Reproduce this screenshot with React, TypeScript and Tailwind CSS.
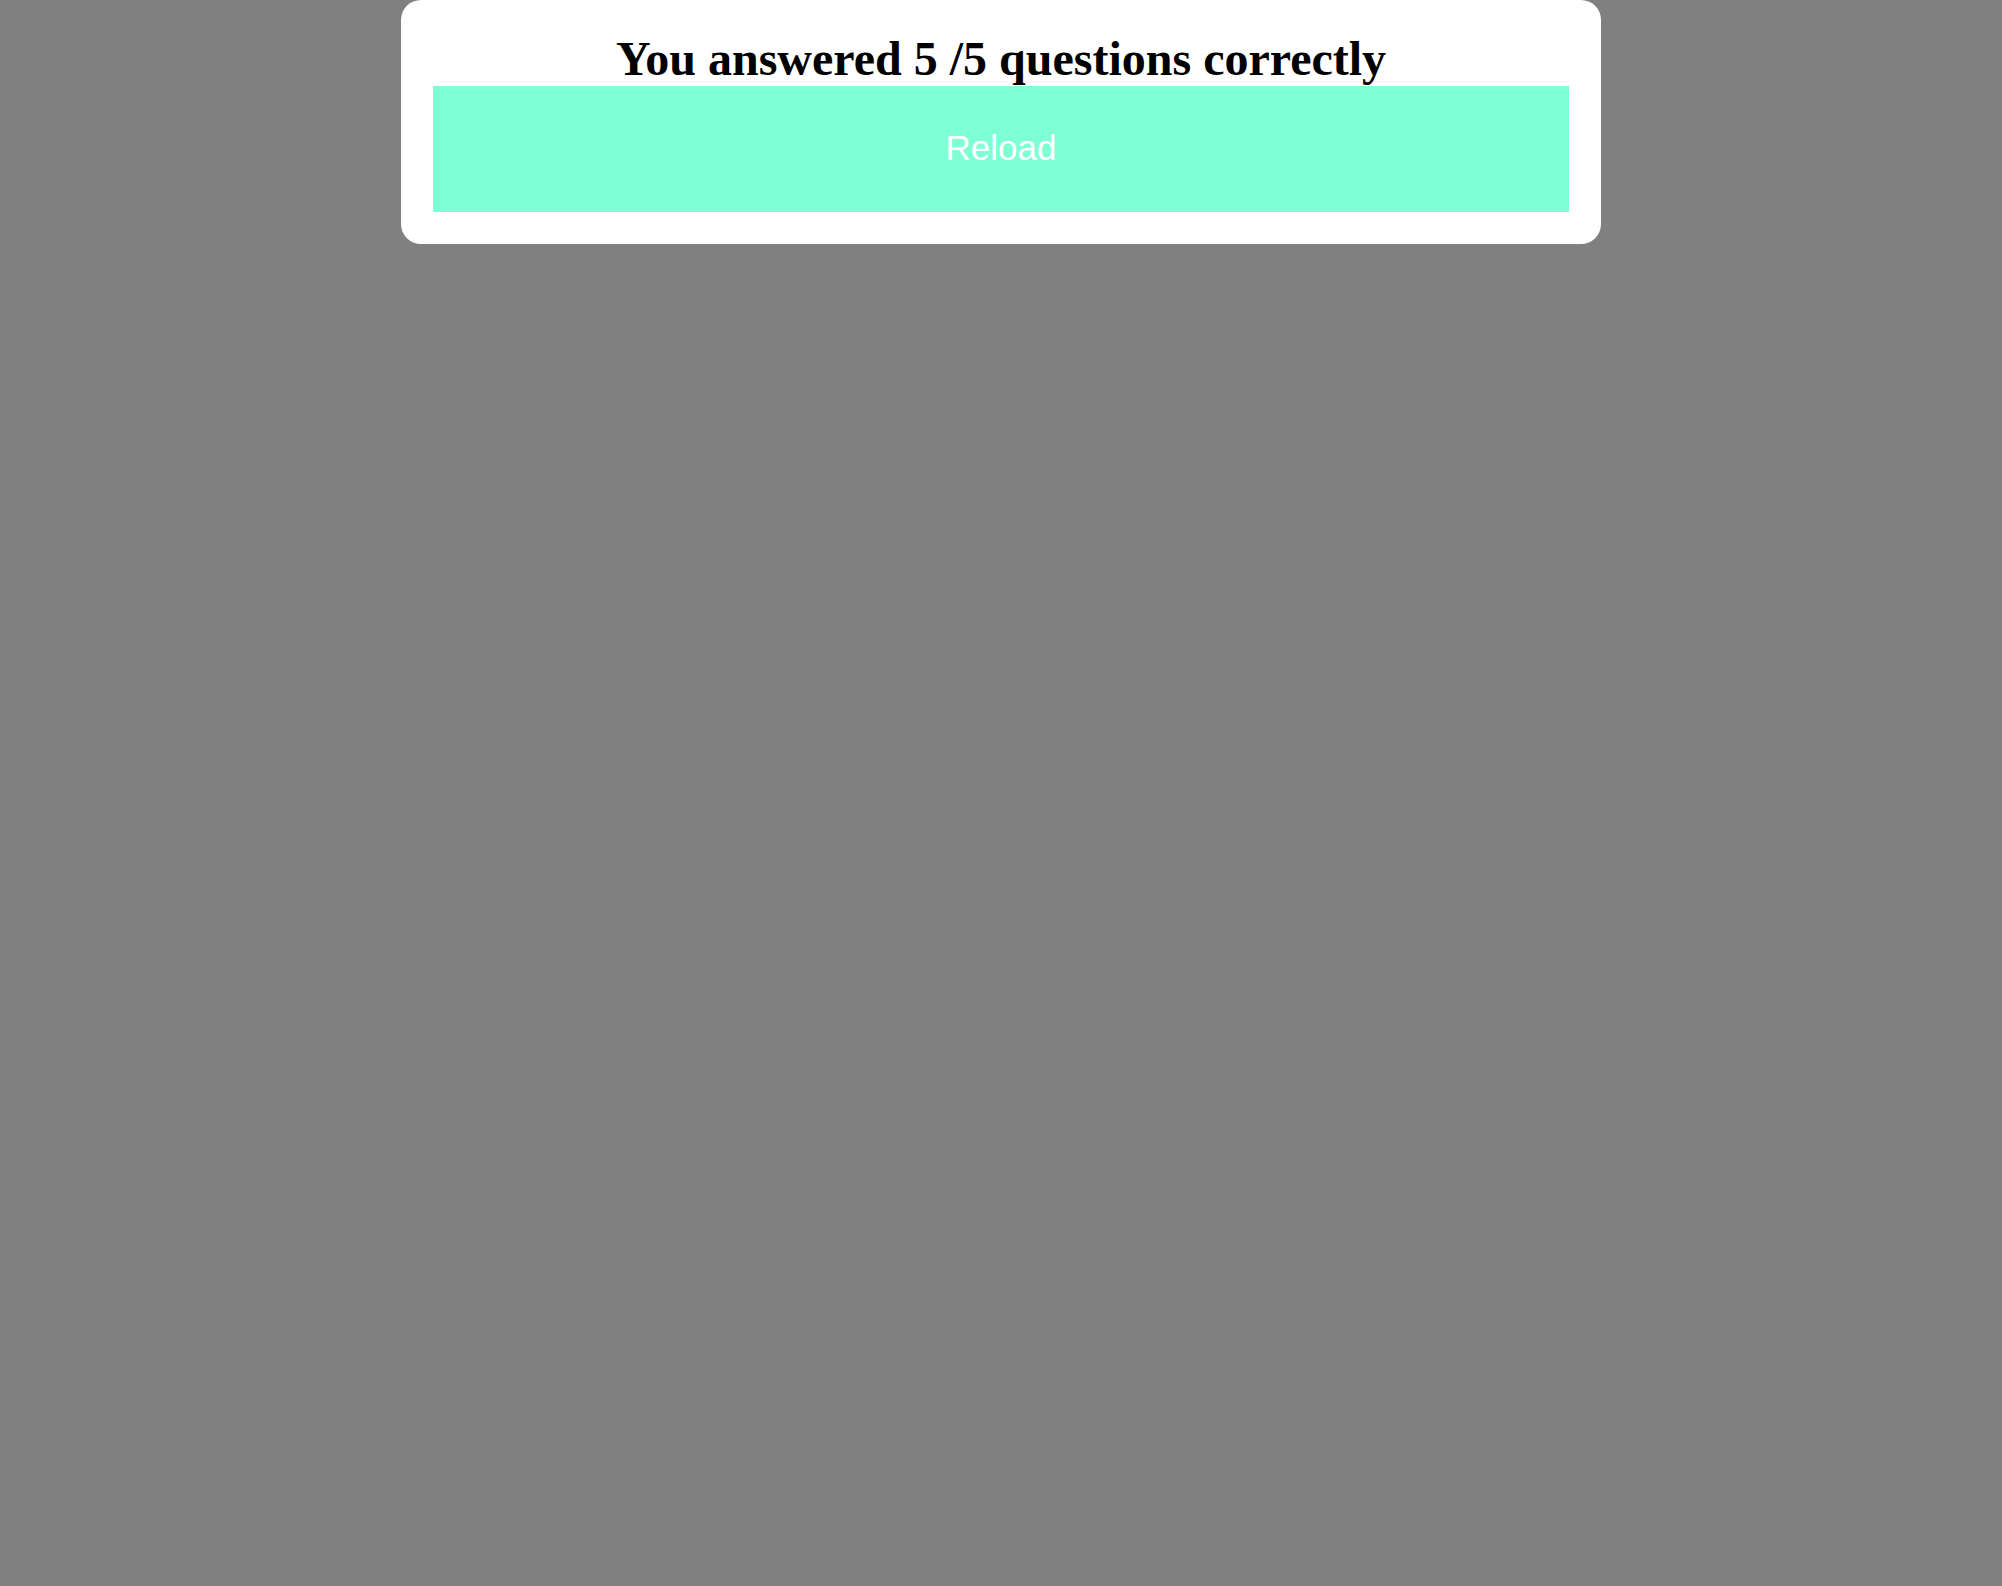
export default function App() {
  const score = 5;
  const total = 5;

  return (
    <div className="min-h-screen w-full bg-[#808080] font-['Liberation_Serif',serif]">
      {/* Result card */}
      <div className="mx-auto flex w-[1200px] flex-col rounded-b-[20px] rounded-t-[20px] bg-white px-8 pt-[31px] pb-8">
        <h1 className="text-center text-[48px] leading-[55px] font-bold text-black">
          You answered {score} /{total} questions correctly
        </h1>
        <button
          type="button"
          onClick={() => window.location.reload()}
          className="h-[126px] w-full bg-[#7fffd4] pb-[2px] font-['Liberation_Sans',Arial,sans-serif] text-[35px] text-white"
        >
          Reload
        </button>
      </div>
    </div>
  );
}
